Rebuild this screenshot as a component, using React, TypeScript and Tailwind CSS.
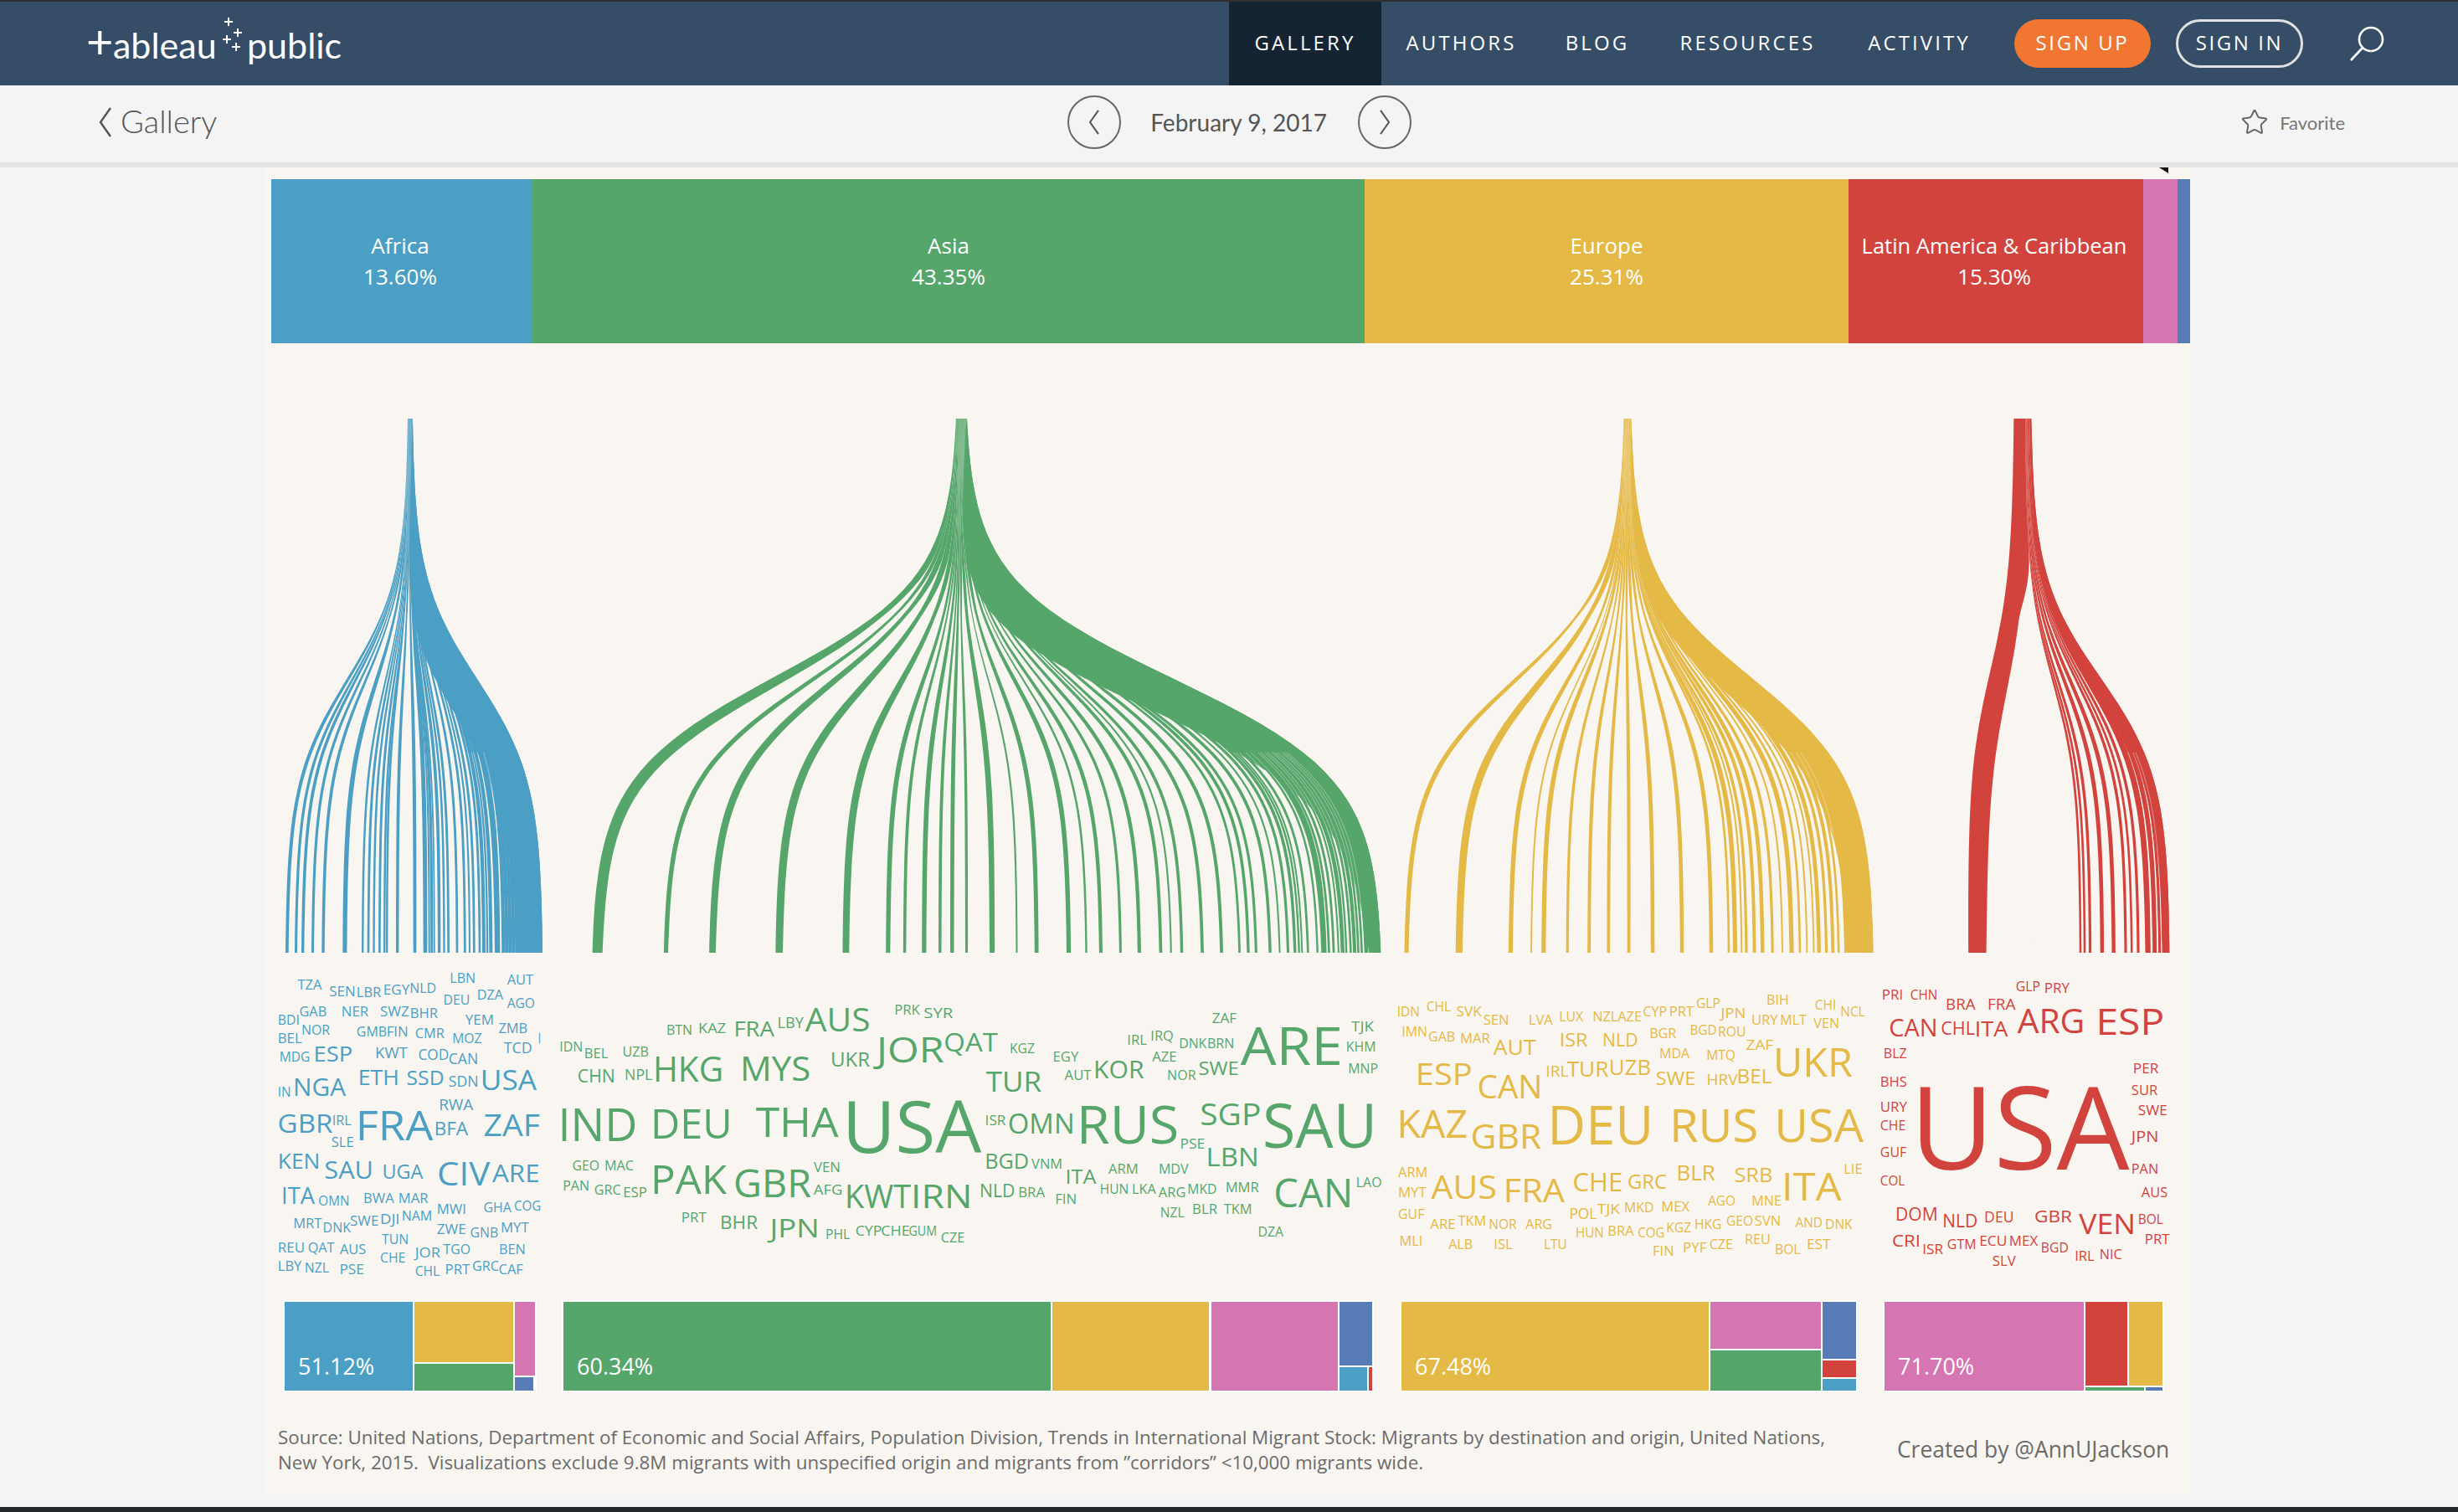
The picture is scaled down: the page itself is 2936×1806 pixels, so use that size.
import React from "react";
import { Star } from "lucide-react";

const BLUE = "#4c9fc4";
const GREEN = "#56a66c";
const YELLOW = "#e5b946";
const RED = "#d3433d";
const PAPER = "#f9f6f1";

const FLOW_TOP = 500;
const FLOW_BOTTOM = 1138;

const raw = (x: number) => 1 / (1 + Math.exp(-10.5 * (x - 0.49)));
const ease = (t: number) => (raw(Math.min(Math.max(t, 0), 1)) - raw(0)) / (raw(1) - raw(0));
const smooth = (a: number, b: number, x: number) => {
  const k = Math.min(Math.max((x - a) / (b - a), 0), 1);
  return k * k * (3 - 2 * k);
};

type Fan = {
  color: string;
  top: number;
  topWidth: number;
  power: number;
  massMid: number;
  massEnd: number;
  bars: [number, number][];
};

const fromZoom = (origin: number, factor: number, list: number[][]) =>
  list.map(([a, b]) => [origin + a / factor, origin + b / factor] as [number, number]);

const splitSolid = (a: number, b: number, step: number) => {
  const out: number[][] = [];
  for (let x = a; x < b; x += step) out.push([x, Math.min(x + step, b)]);
  return out;
};

const fans: Fan[] = [
  {
    color: BLUE,
    top: 490,
    topWidth: 6,
    power: 1,
    massMid: 50,
    massEnd: 30,
    bars: fromZoom(336, 3, [
      [15, 26], [48, 57], [72, 82], [108, 117], [145, 155], [220, 235], [288, 295], [308, 316], [328, 335],
      [348, 356], [366, 373], [375, 382], [411, 421], [473, 484], [509, 523], [527, 533], [535, 544], [546, 551],
      [561, 571], [580, 587], [595, 603], [626, 634], [654, 662], [672, 678], [687, 695], [707, 715], [720, 732],
      [735, 742], [745, 757], [765, 784], ...splitSolid(790, 936, 12),
    ]),
  },
  {
    color: GREEN,
    top: 1148.5,
    topWidth: 13,
    power: 1,
    massMid: 105,
    massEnd: 14,
    bars: [
      ...fromZoom(320, 1.161, [[450, 464], [549, 555], [612, 621], [704, 714], [797, 806], [857, 863], [881, 885], [907, 913], [930, 934]]),
      ...fromZoom(1130, 2.958, [
        [15, 28], [68, 77], [154, 172], [247, 253], [313, 327], [426, 441], [492, 499], [541, 553], [612, 621],
        [677, 689], [753, 764], [792, 798], [828, 838], [900, 911], [968, 979], [1033, 1041], [1063, 1073],
        [1091, 1100], [1140, 1150], [1176, 1182], [1204, 1213], [1228, 1238], [1244, 1251], [1255, 1261],
        [1275, 1283], [1309, 1316], [1326, 1345], [1349, 1357], [1366, 1374], [1384, 1390], [1395, 1408],
        [1411, 1418], [1426, 1434], [1438, 1450], [1453, 1461], [1465, 1473], [1478, 1492], ...splitSolid(1494, 1536, 14),
      ]),
    ],
  },
  {
    color: YELLOW,
    top: 1944,
    topWidth: 9,
    power: 1,
    massMid: 50,
    massEnd: 30,
    bars: fromZoom(1650, 1.6, [
      [44, 52], [142, 155], [243, 251], [285, 288], [306, 314], [353, 358], [394, 400], [431, 437], [470, 476],
      [515, 522], [571, 578], [627, 634], [662, 666], [672, 680], [687, 690], [695, 700], [710, 716], [725, 732],
      [745, 750], [765, 768], [780, 788], [798, 802], [812, 815], [825, 828], [833, 840], [848, 853], [860, 866],
      [872, 876], ...splitSolid(885, 940, 11),
    ]),
  },
  {
    color: RED,
    top: 2416,
    topWidth: 21,
    power: 2,
    massMid: 17,
    massEnd: 8,
    bars: fromZoom(1650, 1.6, [
      [1122, 1156], [1334, 1338], [1342, 1346], [1352, 1357], [1374, 1381], [1396, 1403], [1420, 1425],
      [1432, 1436], [1444, 1449], [1460, 1470], [1474, 1482], [1485, 1490], [1492, 1506],
    ]),
  },
];

const STEPS = 56;

function fanPaths(fan: Fan) {
  const widths = fan.bars.map(([a, b]) => Math.pow(b - a, fan.power));
  const sum = widths.reduce((p, c) => p + c, 0);
  let cursor = fan.top - fan.topWidth / 2;
  const flows = fan.bars.map(([a, b], i) => {
    const wTop = (fan.topWidth * widths[i]) / sum;
    const f = { topC: cursor + wTop / 2, botC: (a + b) / 2, wTop, wBot: b - a };
    cursor += wTop;
    return f;
  });
  const height = FLOW_BOTTOM - FLOW_TOP;
  const edge = (i: number, t: number) => {
    const fl = flows[i];
    const d = 0.004;
    const e = ease(t);
    const slope = ((fl.botC - fl.topC) * (ease(t + d) - ease(t - d))) / (2 * d) / height;
    const bell = Math.sqrt(Math.max(4 * e * (1 - e), 0));
    const th = (fl.wTop + (fl.wBot - fl.wTop) * ease(t + 0.12 * (1 - t))) * (1 + 0.3 * bell);
    const half = (th * Math.sqrt(1 + slope * slope)) / 2;
    const c = fl.topC + (fl.botC - fl.topC) * e;
    return [c - half, c + half];
  };
  const paths: string[] = [];
  flows.forEach((_, i) => {
    const left: string[] = [];
    const right: string[] = [];
    for (let s = 0; s <= STEPS; s++) {
      const t = s / STEPS;
      const y = FLOW_TOP + t * height;
      const [l, r0] = edge(i, t);
      let r = r0;
      if (i < flows.length - 1) {
        const gap = edge(i + 1, t)[0] - r0;
        if (gap > 0) r = r0 + gap * (1 - smooth(0.24, 0.38, t));
      }
      left.push(`${l.toFixed(1)} ${y.toFixed(1)}`);
      right.unshift(`${r.toFixed(1)} ${y.toFixed(1)}`);
    }
    paths.push(`M${left.join("L")}L${right.join("L")}Z`);
  });
  // right shoulder where the small flows run together
  const outer = flows.length - 1;
  const inner: string[] = [];
  const rim: string[] = [];
  for (let s = 0; s <= STEPS; s++) {
    const t = s / STEPS;
    const y = FLOW_TOP + t * height;
    const e = ease(t);
    const r = edge(outer, t)[1];
    const m = fan.massEnd * e + (fan.massMid - fan.massEnd * 0.5) * Math.pow(Math.max(4 * e * (1 - e), 0), 0.75);
    inner.push(`${(r - m).toFixed(1)} ${y.toFixed(1)}`);
    rim.unshift(`${r.toFixed(1)} ${y.toFixed(1)}`);
  }
  paths.push(`M${inner.join("L")}L${rim.join("L")}Z`);
  // hairlines left open between neighbouring flows
  const hairs: string[] = [];
  for (let i = 0; i < flows.length - 1; i++) {
    if (fan.bars[i + 1][0] - fan.bars[i][1] < 0.8) continue;
    const pts: string[] = [];
    for (let s = Math.round(STEPS * 0.62); s <= STEPS; s++) {
      const t = s / STEPS;
      const x = (edge(i, t)[1] + edge(i + 1, t)[0]) / 2;
      pts.push(`${x.toFixed(1)} ${(FLOW_TOP + t * height).toFixed(1)}`);
    }
    hairs.push(`M${pts.join("L")}`);
  }
  return { paths, hairs };
}

// word, left, right, cap top, baseline as read off the picture
const cloud = (origin: number, factor: number, color: string, data: string) =>
  data
    .trim()
    .split(/\s+/)
    .map((row) => {
      const [w, a, b, c, d] = row.split(",");
      const x0 = origin + Number(a) / factor;
      const x1 = origin + Number(b) / factor;
      const top = 1130 + Number(c) / 3;
      const base = 1130 + Number(d) / 3;
      const size = (base - top) / 0.714;
      return { w, x: x0 - 0.05 * size, len: x1 - x0 + 0.08 * size, y: base, size, color };
    });

const words = [
  ...cloud(320, 2.063, BLUE, `
TZA,75,132,122,156 SEN,153,215,145,180 LBR,220,278,147,182 EGY,286,348,140,175 NLD,351,414,134,169 LBN,450,511,98,133
AUT,591,653,104,139 DEU,434,497,176,211 DZA,517,579,158,193 AGO,591,657,187,222 BDI,26,77,248,283 GAB,79,144,218,253
NER,183,247,218,253 SWZ,278,347,218,253 BHR,352,418,224,259 YEM,488,556,248,283 ZMB,570,639,278,313 BEL,26,83,314,349
NOR,84,152,284,319 GMB,220,292,290,325 FIN,294,345,290,325 CMR,364,434,296,331 MOZ,456,526,314,349 I,667,672,314,349
TCD,583,650,347,384 MDG,30,103,380,415 ESP,115,207,358,413 KWT,266,343,365,402 COD,372,445,370,408 CAN,447,517,382,422
ETH,225,322,443,498 SSD,344,433,447,498 SDN,447,518,467,505 USA,527,660,443,515 IN,26,56,505,540 NGA,65,190,475,538
RWA,423,505,550,588 GBR,27,158,605,670 IRL,160,205,607,641 FRA,221,404,590,695 BFA,412,492,632,677 ZAF,535,668,605,682
SLE,158,211,686,720 KEN,27,127,743,798 SAU,142,258,771,835 UGA,284,381,782,833 CIV,421,545,773,857 ARE,556,668,783,846
ITA,36,114,868,925 OMN,126,200,895,931 BWA,237,310,885,920 MAR,323,394,885,920 MWI,418,488,925,960 GHA,533,599,920,955
COG,608,672,914,949 NAM,331,404,950,985 MRT,64,132,975,1010 DNK,137,203,992,1027 SWE,204,272,970,1003 DJI,278,324,963,997
ZWE,418,487,998,1033 GNB,500,567,1010,1045 MYT,575,642,992,1027 TUN,282,346,1034,1069 REU,26,90,1064,1099 QAT,100,163,1064,1099
AUS,179,241,1070,1103 JOR,364,424,1082,1117 TGO,434,498,1070,1105 BEN,571,634,1070,1105 CHE,278,338,1100,1135 LBY,26,82,1130,1165
NZL,92,150,1138,1171 PSE,178,236,1142,1177 CHL,364,422,1148,1183 PRT,438,497,1142,1177 GRC,505,568,1132,1165 CAF,570,628,1142,1177
`),
  ...cloud(650, 1.568, GREEN, `
IDN,30,72,343,378 BEL,76,119,368,403 UZB,148,195,362,397 CHN,64,132,445,490 NPL,152,202,443,480 HKG,207,334,397,486
MYS,370,497,395,482 BTN,230,277,285,318 KAZ,290,340,277,312 FRA,357,430,270,323 LBY,438,485,256,293 AUS,492,609,222,306
PRK,657,703,212,247 SYR,712,765,222,258 UKR,538,609,382,432 JOR,626,747,325,416 QAT,751,848,310,378 KGZ,873,918,350,385
TUR,830,930,450,522 EGY,954,1000,380,415 AUT,976,1024,446,481 KOR,1031,1122,410,474 IRL,1093,1128,320,355 IRQ,1137,1178,303,338
AZE,1140,1184,380,415 DNK,1190,1240,333,367 BRN,1243,1292,333,367 ZAF,1252,1296,243,277 NOR,1168,1220,446,481 SWE,1227,1300,415,463
ARE,1309,1493,290,425 TJK,1513,1553,273,307 KHM,1503,1557,345,379 MNP,1507,1561,422,457 IND,30,172,583,700 DEU,203,350,585,690
THA,400,549,578,683 USA,565,815,555,740 ISR,827,864,608,642 OMN,871,992,600,672 RUS,1002,1186,573,708 SGP,1231,1341,562,642
SAU,1351,1557,567,722 PSE,1192,1237,692,726 LBN,1242,1337,722,790 BGD,827,907,743,797 VNM,914,970,765,798 ITA,978,1033,800,852
ARM,1058,1112,782,816 MDV,1152,1206,782,816 CAN,1370,1513,835,935 LAO,1522,1568,830,864 GEO,54,103,770,805 MAC,114,167,770,805
VEN,506,554,777,810 PAK,203,340,787,887 GBR,358,498,803,900 PAN,36,84,843,876 GRC,95,143,855,890 ESP,149,192,866,900
AFG,506,558,857,892 KWT,566,685,858,940 IRN,690,800,858,940 NLD,817,881,855,900 BRA,889,937,866,900 FIN,958,997,890,925
HUN,1042,1094,855,888 LKA,1102,1145,855,888 ARG,1152,1201,866,901 MKD,1206,1259,855,888 MMR,1277,1338,850,883 NZL,1155,1198,938,972
BLR,1215,1260,927,960 TKM,1274,1325,927,960 DZA,1338,1384,1006,1040 PRT,258,303,957,990 BHR,331,399,968,1013 JPN,425,514,977,1044
PHL,528,572,1017,1050 CYP,584,632,1004,1038 CHE,632,684,1004,1038 GUM,684,735,1004,1038 CZE,744,787,1030,1063
`),
  ...cloud(1640, 2.529, YELLOW, `
IDN,75,140,218,253 CHL,163,234,200,235 SVK,254,327,218,253 SEN,335,410,248,283 LVA,472,542,248,283 LUX,564,634,236,271
NZL,665,738,236,271 AZE,741,811,236,271 CYP,817,887,218,253 PRT,897,968,218,253 GLP,978,1048,188,223 JPN,1053,1125,224,259
URY,1145,1222,248,283 MLT,1232,1308,248,283 BIH,1191,1255,176,211 CHI,1337,1398,194,229 NCL,1414,1485,218,253 VEN,1333,1408,260,295
IMN,89,163,290,325 GAB,169,247,308,343 MAR,265,352,314,349 AUT,367,490,335,390 ISR,566,647,312,360 NLD,696,799,312,360
BGR,837,915,296,331 BGD,959,1037,284,319 ROU,1044,1125,290,325 ZAF,1129,1208,336,371 MDA,867,955,368,403 MTQ,1009,1094,374,409
ESP,133,298,418,497 CAN,320,509,462,545 IRL,524,589,430,468 TUR,589,710,414,467 UZB,716,838,408,461 SWE,857,973,450,498
HRV,1010,1100,460,498 BEL,1102,1203,442,492 UKR,1215,1445,365,468 KAZ,78,283,592,688 GBR,300,506,638,725 DEU,535,843,575,712
RUS,902,1160,585,702 USA,1219,1478,585,702 ARM,78,164,794,829 MYT,78,160,866,901 AUS,181,371,822,905 FRA,399,576,835,917
CHE,607,752,815,880 GRC,772,886,820,870 BLR,920,1032,787,840 SRB,1094,1206,796,847 ITA,1240,1412,815,912 LIE,1424,1477,782,817
GUF,78,154,944,979 ARE,175,248,980,1015 TKM,259,341,968,1003 NOR,352,433,980,1015 ARG,463,540,980,1015 POL,595,675,940,978
TJK,679,745,926,961 MKD,761,847,920,955 MEX,873,955,915,950 AGO,1014,1094,896,931 MNE,1146,1233,896,931 HUN,614,696,1010,1045
BRA,711,787,1004,1039 COG,802,880,1010,1045 KGZ,888,960,992,1027 HKG,973,1052,980,1015 GEO,1069,1147,968,1003 SVN,1155,1231,968,1003
AND,1278,1357,974,1009 DNK,1368,1447,980,1015 MLI,82,149,1040,1075 ALB,230,300,1052,1087 ISL,367,420,1052,1087 LTU,518,585,1052,1087
FIN,847,908,1076,1111 PYF,938,1007,1064,1099 CZE,1018,1086,1052,1087 REU,1125,1200,1034,1069 BOL,1216,1290,1070,1105 EST,1312,1381,1052,1087
`),
  ...cloud(2230, 3, RED, `
PRI,56,128,158,193 CHN,158,251,158,193 BRA,285,387,190,229 FRA,435,531,190,229 GLP,536,620,128,163 PRY,638,725,134,169
CAN,83,251,260,323 CHL,268,385,272,318 ITA,390,503,268,323 ARG,545,777,225,312 ESP,827,1062,222,317 BLZ,62,142,368,402
BHS,50,142,470,505 URY,50,142,560,595 CHE,50,137,626,660 GUF,50,140,722,757 COL,50,134,824,859 PER,956,1044,422,456
SUR,950,1040,500,535 SWE,974,1075,572,606 JPN,950,1044,664,702 PAN,950,1043,782,817 AUS,986,1076,866,900 USA,175,928,505,800
DOM,105,252,938,983 NLD,274,395,962,1007 DEU,423,525,952,989 GBR,603,733,945,989 VEN,765,960,960,1032 BOL,974,1060,962,997
CRI,93,190,1034,1078 ISR,201,272,1070,1104 GTM,290,390,1052,1086 ECU,405,501,1038,1074 MEX,512,611,1040,1074 BGD,626,721,1064,1098
PRT,998,1083,1034,1068 SLV,452,532,1112,1146 IRL,747,814,1094,1128 NIC,836,913,1088,1122
`),
];

function Chevron({ dir, className }: { dir: "left" | "right"; className: string }) {
  return (
    <svg viewBox="0 0 16 36" fill="none" stroke="currentColor" strokeWidth="2.4" className={className}>
      <polyline points={dir === "left" ? "14,1 2,18 14,35" : "2,1 14,18 2,35"} />
    </svg>
  );
}

function NavItem({ label, width, active }: { label: string; width: string; active?: boolean }) {
  return (
    <div
      className={`flex h-full items-center justify-center pb-[3px] text-[24px] font-medium tracking-[3.1px] text-white ${width} ${
        active ? "bg-[#142433]" : ""
      }`}
    >
      {label}
    </div>
  );
}

function Cell({ bg, className = "", label }: { bg: string; className?: string; label?: string }) {
  return (
    <div className={`flex items-end pb-[13px] pl-[16px] text-[27px] leading-[32px] text-white ${bg} ${className}`}>{label}</div>
  );
}

export default function App() {
  return (
    <div className="flex h-[1806px] w-[2936px] flex-col overflow-hidden bg-[#f4f4f4] font-['Open_Sans',sans-serif]">
      <div className="h-[2px] bg-[#2c2e30]" />

      {/* Top nav */}
      <nav className="flex h-[100px] items-center bg-[#354d66] pl-[106px] pr-[88px]">
        <div className="mb-[6px] flex items-baseline font-['Lato',sans-serif] text-[43px] font-normal leading-none text-white">
          <span className="-ml-[3px] w-[32px] text-[56px]">+</span>
          <span className="w-[130px]">ableau</span>
          <svg viewBox="0 0 30 44" className="h-[44px] w-[30px] self-start" stroke="white" strokeWidth="2">
            <path d="M8 0v10M3 5h10M19 13v10M14 18h10M6 21v10M1 26h10M17 30v10M12 35h10" />
          </svg>
          <span>public</span>
        </div>

        <div className="ml-auto flex h-full items-center">
          <NavItem label="GALLERY" width="w-[182px]" active />
          <NavItem label="AUTHORS" width="w-[191px]" />
          <NavItem label="BLOG" width="w-[134px]" />
          <NavItem label="RESOURCES" width="w-[225px]" />
          <NavItem label="ACTIVITY" width="w-[185px]" />
          <div className="ml-[21px] flex h-[58px] w-[163px] items-center justify-center rounded-full bg-[#f07631] pb-[3px] text-[24px] font-medium tracking-[2.6px] text-white">
            SIGN UP
          </div>
          <div className="ml-[30px] flex h-[58px] w-[152px] items-center justify-center rounded-full border-[3px] border-[#e0e0e0] pb-[3px] text-[24px] font-medium tracking-[2.6px] text-white">
            SIGN IN
          </div>
          <svg viewBox="0 0 42 42" fill="none" stroke="white" strokeWidth="2.6" className="ml-[55px] h-[42px] w-[42px]">
            <circle cx="26" cy="16" r="14" />
            <path d="M16 26 2 41" />
          </svg>
        </div>
      </nav>

      {/* Sub bar */}
      <div className="relative flex h-[98px] items-center border-b-[6px] border-[#e4e4e4] pb-[4px] pl-[118px] pr-[135px] text-[#555]">
        <Chevron dir="left" className="h-[36px] w-[16px]" />
        <span className="mb-[4px] ml-[10px] font-['Lato',sans-serif] text-[38px] font-light">Gallery</span>

        <div className="ml-[1016px] flex items-center">
          <div className="flex h-[64px] w-[64px] items-center justify-center rounded-full border-2 border-[#666]">
            <Chevron dir="left" className="h-[30px] w-[14px]" />
          </div>
          <span className="ml-[35px] mr-[37px] font-['Lato',sans-serif] text-[28px]">February 9, 2017</span>
          <div className="flex h-[64px] w-[64px] items-center justify-center rounded-full border-2 border-[#666]">
            <Chevron dir="right" className="h-[30px] w-[14px]" />
          </div>
        </div>

        <div className="ml-auto flex items-center gap-[13px]">
          <Star className="h-[34px] w-[34px] text-[#666]" strokeWidth={1.4} />
          <span className="font-['Lato',sans-serif] text-[22px] text-[#777]">Favorite</span>
        </div>
      </div>

      {/* Viz */}
      <div className="ml-[316px] h-[1586px] w-[2300px] shrink-0 bg-[#f9f6f1]">
        <div className="flex h-[14px] justify-end pr-[26px]">
          <svg viewBox="0 0 11 7" className="h-[7px] w-[11px]">
            <path d="M0 0h11v7z" fill="#111" />
          </svg>
        </div>

        <div className="ml-[8px] flex h-[196px] text-center text-[26px] font-medium leading-[37px] text-white">
          <div className="flex w-[312px] flex-col justify-center bg-[#4c9fc4] pr-[4px]">
            <span>Africa</span>
            <span>13.60%</span>
          </div>
          <div className="flex w-[994px] flex-col justify-center bg-[#56a66c]">
            <span>Asia</span>
            <span>43.35%</span>
          </div>
          <div className="flex w-[578px] flex-col justify-center bg-[#e5b946]">
            <span>Europe</span>
            <span>25.31%</span>
          </div>
          <div className="flex w-[352px] flex-col justify-center bg-[#d3433d] pr-[4px]">
            <span className="whitespace-nowrap text-[25.5px]">Latin America &amp; Caribbean</span>
            <span>15.30%</span>
          </div>
          <div className="w-[41px] bg-[#d575b1]" />
          <div className="w-[15px] bg-[#587cb5]" />
        </div>

        {/* Flows and word clouds */}
        <svg viewBox="316 410 2300 1143" className="block h-[1143px] w-[2300px]">
          {fans.map((fan) => {
            const { paths, hairs } = fanPaths(fan);
            return (
              <g key={fan.color}>
                <g fill={fan.color}>
                  {paths.map((d, i) => (
                    <path key={i} d={d} />
                  ))}
                </g>
                <g fill="none" stroke={PAPER} strokeWidth="0.9" strokeOpacity="0.45">
                  {hairs.map((d, i) => (
                    <path key={i} d={d} />
                  ))}
                </g>
              </g>
            );
          })}
          {words.map((t, i) => (
            <text
              key={i}
              x={t.x}
              y={t.y}
              fontSize={t.size}
              fill={t.color}
              textLength={t.len}
              lengthAdjust="spacingAndGlyphs"
              className="font-['Open_Sans',sans-serif]"
            >
              {t.w}
            </text>
          ))}
        </svg>

        {/* Treemaps */}
        <div className="ml-[22px] flex h-[110px]">
          <div className="flex w-[303px] gap-[2px] bg-white p-[2px]">
            <Cell bg="bg-[#4c9fc4]" className="w-[153px]" label="51.12%" />
            <div className="flex w-[118px] flex-col gap-[2px]">
              <div className="h-[72px] bg-[#e5b946]" />
              <div className="h-[32px] bg-[#56a66c]" />
            </div>
            <div className="flex w-[24px] flex-col gap-[2px]">
              <div className="h-[88px] bg-[#d575b1]" />
              <div className="h-[16px] w-[22px] bg-[#587cb5]" />
            </div>
          </div>

          <div className="ml-[30px] flex w-[970px] gap-[2px] bg-white p-[2px]">
            <Cell bg="bg-[#56a66c]" className="w-[582px]" label="60.34%" />
            <div className="w-[187px] bg-[#e5b946]" />
            <div className="ml-px w-[151px] bg-[#d575b1]" />
            <div className="flex w-[39px] flex-col gap-[2px]">
              <div className="h-[76px] bg-[#587cb5]" />
              <div className="flex h-[28px] gap-[2px]">
                <div className="w-[33px] bg-[#4c9fc4]" />
                <div className="w-[4px] bg-[#d3433d]" />
              </div>
            </div>
          </div>

          <div className="ml-[31px] flex w-[547px] gap-[2px] bg-white p-[2px]">
            <Cell bg="bg-[#e5b946]" className="w-[367px]" label="67.48%" />
            <div className="flex w-[132px] flex-col gap-[2px]">
              <div className="h-[56px] bg-[#d575b1]" />
              <div className="h-[48px] bg-[#56a66c]" />
            </div>
            <div className="flex w-[40px] flex-col gap-[2px]">
              <div className="h-[68px] bg-[#587cb5]" />
              <div className="h-[20px] bg-[#d3433d]" />
              <div className="h-[14px] bg-[#4c9fc4]" />
            </div>
          </div>

          <div className="ml-[30px] flex w-[336px] gap-[2px] bg-white p-[2px]">
            <Cell bg="bg-[#d575b1]" className="w-[238px]" label="71.70%" />
            <div className="flex w-[92px] flex-col gap-[2px]">
              <div className="flex h-[100px] gap-[2px]">
                <div className="w-[50px] bg-[#d3433d]" />
                <div className="w-[40px] bg-[#e5b946]" />
              </div>
              <div className="flex h-[4px] gap-[2px]">
                <div className="w-[70px] bg-[#56a66c]" />
                <div className="w-[20px] bg-[#587cb5]" />
              </div>
            </div>
          </div>
        </div>

        {/* Footer */}
        <div className="ml-[16px] mt-[39px] flex text-[#6b6b6b]">
          <div className="w-[1934px] whitespace-pre text-[22.35px] leading-[30px]">
            <div>
              Source: United Nations, Department of Economic and Social Affairs, Population Division, Trends in International Migrant Stock: Migrants by destination and origin, United Nations,
            </div>
            <div>New York, 2015.  Visualizations exclude 9.8M migrants with unspecified origin and migrants from ”corridors” &lt;10,000 migrants wide.</div>
          </div>
          <div className="mt-[14px] whitespace-nowrap text-[26.4px] leading-[30px]">Created by @AnnUJackson</div>
        </div>
      </div>

      <div className="flex-1" />
      <div className="h-[6px] bg-[#22272a]" />
    </div>
  );
}
